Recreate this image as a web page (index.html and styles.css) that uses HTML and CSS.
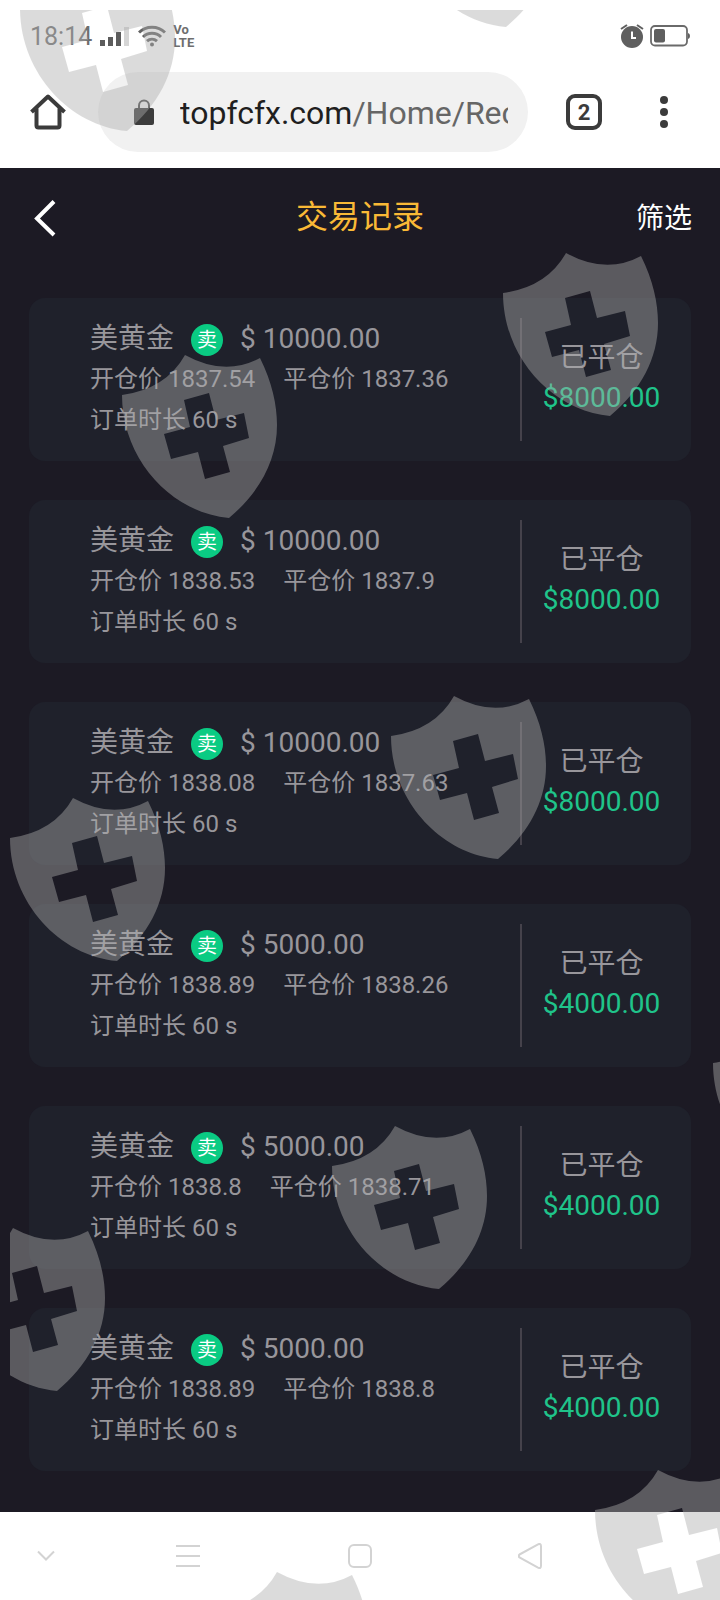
FILE: index.html
```html
<!DOCTYPE html>
<html lang="zh-CN">
<head>
  <meta charset="UTF-8">
  <meta name="viewport" content="width=device-width, initial-scale=1">
  <title>交易记录</title>
  <link rel="stylesheet" href="styles.css">
</head>
<body>

<div class="phone">

  <!-- status bar -->
  <div class="status-bar">
    <span class="clock">18:14</span>
    <svg class="signal" width="30" height="22" viewBox="0 0 30 22">
      <path d="M0 15h5v6H0zM8 12h5v9H8zM16 7h5v14h-5z" fill="#5c5c5c"/>
      <path d="M24 2h5v19h-5z" fill="#d6d6d6"/>
    </svg>
    <svg class="wifi" width="28" height="22" viewBox="0 0 28 22" fill="none" stroke="#626262" stroke-width="3">
      <path d="M1 7.500C8 .500 20 .500 27 7.500"/>
      <path d="M5 12C10 7 18 7 23 12"/>
      <path d="M9 16.200C12 13.500 16 13.500 19 16.200"/>
      <circle cx="14" cy="19.500" r="2" fill="#626262" stroke="none"/>
    </svg>
    <span class="volte">Vo<br>LTE</span>
    <svg class="alarm" width="24" height="24" viewBox="0 0 24 24">
      <circle cx="12" cy="13" r="11" fill="#5f5f5f"/>
      <path d="M1 5l6-4M23 5l-6-4" stroke="#5f5f5f" stroke-width="2" fill="none"/>
      <path d="M12 7.500v6.500h4" stroke="#fff" stroke-width="2" fill="none"/>
    </svg>
    <svg class="battery" width="40" height="22" viewBox="0 0 40 22">
      <rect x="1" y="1" width="36" height="19.500" rx="4" fill="#fff" stroke="#6a6a6a" stroke-width="1.800"/>
      <rect x="4" y="4" width="11" height="13.500" rx="2" fill="#5f5f5f"/>
      <path d="M38 8q2 .500 2 3t-2 3z" fill="#5f5f5f"/>
    </svg>
  </div>

  <!-- browser toolbar -->
  <div class="toolbar">
    <button class="icon-btn" aria-label="Home">
      <svg width="36" height="36" viewBox="0 0 36 36" fill="none" stroke="#3b3b3b" stroke-width="4" stroke-linejoin="round">
        <path d="M1.500 18L18 2.500 34.500 18M6.500 14.500V31.500q0 2 2 2h19q2 0 2-2V14.500"/>
      </svg>
    </button>
    <a class="address" href="#">
      <svg width="20" height="27" viewBox="0 0 20 27">
        <path d="M5 10V6.500a5 5 0 0 1 10 0V10" fill="none" stroke="#4a4a4a" stroke-width="2"/>
        <rect x="0" y="9" width="20" height="17" rx="2" fill="#3c3c3c"/>
      </svg>
      <span class="url">topfcfx.com<span class="path">/Home/Rec</span></span>
    </a>
    <button class="icon-btn tabs" aria-label="Tabs">2</button>
    <button class="icon-btn more" aria-label="More">
      <svg width="8" height="32" viewBox="0 0 8 32" fill="#3b3b3b">
        <circle cx="4" cy="4" r="4"/><circle cx="4" cy="16" r="4"/><circle cx="4" cy="28" r="4"/>
      </svg>
    </button>
  </div>

  <div class="page">
    <header class="header">
      <button class="icon-btn back" aria-label="返回">
        <svg width="24" height="38" viewBox="0 0 24 38" fill="none" stroke="#fff" stroke-width="4">
          <path d="M21 2.500L4 19.500 21 36"/>
        </svg>
      </button>
      <h1 class="title">交易记录</h1>
      <button class="icon-btn filter">筛选</button>
    </header>

    <main class="records">
      <section class="card">
        <div class="info">
          <div class="row name">美黄金<span class="badge">卖</span>$ 10000.00</div>
          <div class="row prices"><span>开仓价 1837.54</span><span>平仓价 1837.36</span></div>
          <div class="row">订单时长 60 s</div>
        </div>
        <div class="state">
          <div>已平仓</div>
          <div class="profit">$8000.00</div>
        </div>
      </section>

      <section class="card">
        <div class="info">
          <div class="row name">美黄金<span class="badge">卖</span>$ 10000.00</div>
          <div class="row prices"><span>开仓价 1838.53</span><span>平仓价 1837.9</span></div>
          <div class="row">订单时长 60 s</div>
        </div>
        <div class="state">
          <div>已平仓</div>
          <div class="profit">$8000.00</div>
        </div>
      </section>

      <section class="card">
        <div class="info">
          <div class="row name">美黄金<span class="badge">卖</span>$ 10000.00</div>
          <div class="row prices"><span>开仓价 1838.08</span><span>平仓价 1837.63</span></div>
          <div class="row">订单时长 60 s</div>
        </div>
        <div class="state">
          <div>已平仓</div>
          <div class="profit">$8000.00</div>
        </div>
      </section>

      <section class="card">
        <div class="info">
          <div class="row name">美黄金<span class="badge">卖</span>$ 5000.00</div>
          <div class="row prices"><span>开仓价 1838.89</span><span>平仓价 1838.26</span></div>
          <div class="row">订单时长 60 s</div>
        </div>
        <div class="state">
          <div>已平仓</div>
          <div class="profit">$4000.00</div>
        </div>
      </section>

      <section class="card">
        <div class="info">
          <div class="row name">美黄金<span class="badge">卖</span>$ 5000.00</div>
          <div class="row prices"><span>开仓价 1838.8</span><span>平仓价 1838.71</span></div>
          <div class="row">订单时长 60 s</div>
        </div>
        <div class="state">
          <div>已平仓</div>
          <div class="profit">$4000.00</div>
        </div>
      </section>

      <section class="card">
        <div class="info">
          <div class="row name">美黄金<span class="badge">卖</span>$ 5000.00</div>
          <div class="row prices"><span>开仓价 1838.89</span><span>平仓价 1838.8</span></div>
          <div class="row">订单时长 60 s</div>
        </div>
        <div class="state">
          <div>已平仓</div>
          <div class="profit">$4000.00</div>
        </div>
      </section>
    </main>
  </div>

  <!-- system navigation -->
  <nav class="system-nav">
    <button class="icon-btn" aria-label="Hide">
      <svg width="18" height="12" viewBox="0 0 18 12"><path d="M1 1.500l8 8 8-8"/></svg>
    </button>
    <button class="icon-btn" aria-label="Menu">
      <svg width="24" height="24" viewBox="0 0 24 24"><path d="M0 2h24M0 12h24M0 22h24"/></svg>
    </button>
    <button class="icon-btn" aria-label="Home screen">
      <svg width="24" height="24" viewBox="0 0 24 24"><rect x="1" y="1" width="22" height="22" rx="5"/></svg>
    </button>
    <button class="icon-btn" aria-label="Back">
      <svg width="24" height="26" viewBox="0 0 24 26"><path d="M1.500 11.500L20 1.300q3-1.300 3 2v19.400q0 3.300-3 2L1.500 14.500q-1.500-1.500 0-3z"/></svg>
    </button>
  </nav>

  <!-- shield watermarks -->
  <div class="watermark">
    <svg width="710" height="1590" viewBox="10 10 710 1590" aria-hidden="true">
      <defs>
        <path id="shield" fill-rule="evenodd" d="M0 40Q44 34 63 0Q103 22 138 3C150 27 155 50 155 70C155 105 138 137 107 163C50 158 0 105 0 40ZM62 45L87 38 94 65 122 58 127 83 101 91 108 117 83 124 76 97 49 104 42 79 68 72Z"/>
      </defs>
      <use href="#shield" x="20" y="-32"/>
      <use href="#shield" x="399" y="-136"/>
      <use href="#shield" x="503" y="253"/>
      <use href="#shield" x="122" y="355"/>
      <use href="#shield" x="391" y="696"/>
      <use href="#shield" x="10" y="798"/>
      <use href="#shield" x="713" y="1023"/>
      <use href="#shield" x="332" y="1126"/>
      <use href="#shield" x="-50" y="1228"/>
      <use href="#shield" x="595" y="1470"/>
      <use href="#shield" x="214" y="1572"/>
    </svg>
  </div>

</div>

</body>
</html>
```

FILE: styles.css
```css
* {
  box-sizing: border-box;
}
body {
  margin: 0;
  font-family: Roboto, "Noto Sans CJK SC", sans-serif;
  background: #fff;
}
.phone {
  position: relative;
  min-height: 100vh;
  display: flex;
  flex-direction: column;
  overflow: hidden;
}
svg {
  display: block;
  flex: none;
}
.icon-btn {
  padding: 0;
  border: 0;
  background: none;
  font-family: inherit;
  display: flex;
  align-items: center;
  justify-content: center;
}

/* status bar */
.status-bar {
  height: 72px;
  padding: 0 30px;
  display: flex;
  align-items: center;
  color: #6e6e6e;
}
.clock {
  font-size: 25px;
}
.signal {
  margin-left: 8px;
}
.wifi {
  margin-left: 8px;
}
.volte {
  margin-left: 7px;
  font-size: 13px;
  line-height: 13px;
  font-weight: 700;
}
.alarm {
  margin-left: auto;
}
.battery {
  margin-left: 6px;
}

/* browser toolbar */
.toolbar {
  padding: 0 36px 16px 30px;
  display: flex;
  align-items: center;
}
.address {
  flex: 1;
  min-width: 0;
  height: 80px;
  margin: 0 38px 0 32px;
  padding: 0 20px 0 36px;
  border-radius: 40px;
  background: #f1f1f1;
  display: flex;
  align-items: center;
  gap: 26px;
  text-decoration: none;
}
.url {
  padding-top: 2px;
  overflow: hidden;
  white-space: nowrap;
  font-size: 32px;
  color: #1f1f1f;
}
.path {
  color: #666;
}
.tabs {
  width: 36px;
  height: 36px;
  border: 4px solid #3b3b3b;
  border-radius: 9px;
  font-size: 22px;
  font-weight: 700;
  color: #3b3b3b;
}
.more {
  width: 40px;
  margin-left: 42px;
}

/* page */
.page {
  background: #1c1a24;
  padding: 0 28px 41px;
}
.header {
  height: 100px;
  display: grid;
  grid-template-columns: 1fr auto 1fr;
  align-items: center;
  line-height: 40px;
}
.back {
  justify-self: start;
  padding-left: 5px;
}
.title {
  margin: 0;
  padding-bottom: 2px;
  font-size: 32px;
  font-weight: 400;
  color: #f9b936;
}
.filter {
  justify-self: end;
  padding-top: 2px;
  font-size: 28px;
  line-height: 40px;
  color: #fff;
}
.records {
  padding: 30px 1px 0;
  display: grid;
  gap: 39px;
}
.card {
  padding: 20px 10px 20px 61px;
  border-radius: 16px;
  background: #1f212b;
  color: #98969b;
  display: flex;
}
.info {
  flex: 1;
}
.row {
  height: 41px;
  display: flex;
  align-items: center;
  font-size: 24px;
  line-height: 41px;
}
.name {
  font-size: 28px;
}
.badge {
  width: 32px;
  height: 32px;
  margin: 2px 17px 0;
  border-radius: 50%;
  background: #0acb83;
  color: #fff;
  font-size: 20px;
  line-height: 32px;
  text-align: center;
}
.prices {
  gap: 28px;
}
.state {
  width: 161px;
  padding-top: 20px;
  border-left: 2px solid #45424b;
  font-size: 28px;
  line-height: 40px;
  text-align: center;
}
.profit {
  color: #1fc48a;
}

/* system navigation */
.system-nav {
  flex: 1;
  min-height: 88px;
  display: grid;
  grid-template-columns: 92fr 192fr 152fr 188fr 96fr;
  align-items: center;
}
.system-nav svg {
  fill: none;
  stroke: #d3d3d3;
  stroke-width: 2;
}

/* watermark */
.watermark {
  position: absolute;
  inset: 10px 0 0 10px;
  overflow: hidden;
  pointer-events: none;
}
.watermark svg {
  fill: #aeaeae;
  opacity: 0.43;
}
```
